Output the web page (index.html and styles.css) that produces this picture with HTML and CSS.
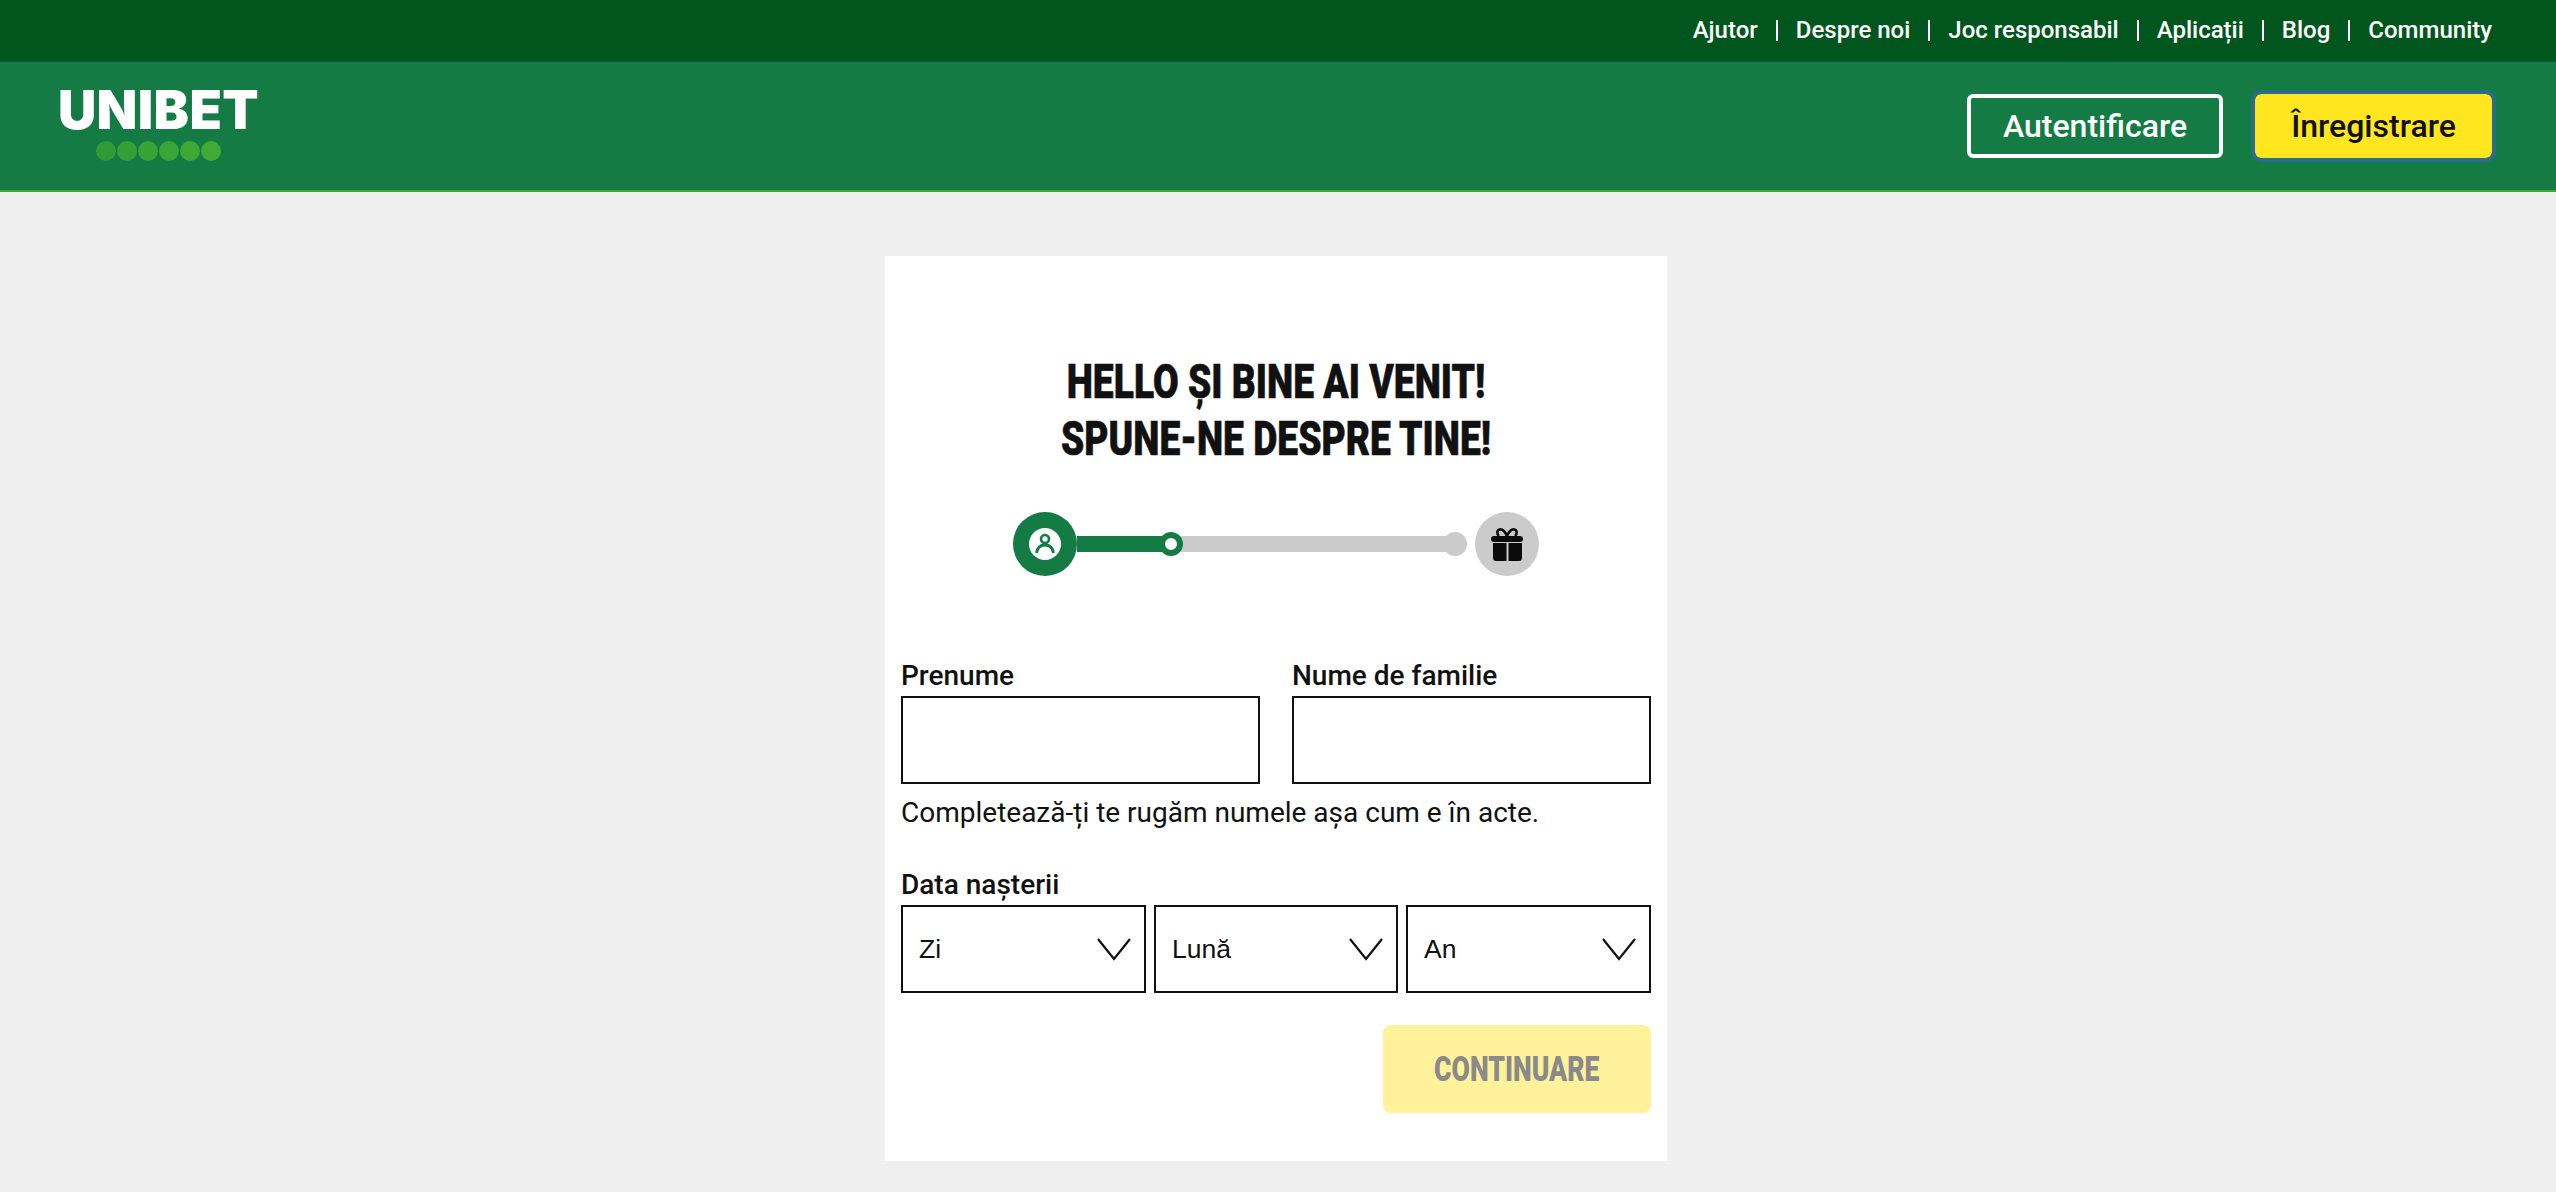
FILE: index.html
```html
<!DOCTYPE html>
<html lang="ro">
<head>
<meta charset="utf-8">
<title>Unibet</title>
<link rel="stylesheet" href="styles.css">
</head>
<body>
<header class="site-header">
  <nav class="topbar">
    <a>Ajutor</a><span class="sep"></span><a>Despre noi</a><span class="sep"></span><a>Joc responsabil</a><span class="sep"></span><a>Aplicații</a><span class="sep"></span><a>Blog</a><span class="sep"></span><a>Community</a>
  </nav>
  <div class="mainbar">
    <div class="logo">
      <span class="logo-text">UNIBET</span>
      <span class="logo-dots"><i></i><i></i><i></i><i></i><i></i><i></i></span>
    </div>
    <div class="actions">
      <button class="btn btn-login">Autentificare</button>
      <button class="btn btn-register">Înregistrare</button>
    </div>
  </div>
</header>
<main class="page">
  <section class="card">
    <h1 class="title">HELLO ȘI BINE AI VENIT!<br>SPUNE-NE DESPRE TINE!</h1>
    <div class="stepper">
      <span class="step step-active">
        <svg viewBox="0 0 32 32" width="32" height="32"><circle cx="16" cy="16" r="16" fill="#fff"/><circle cx="16" cy="11" r="4" fill="none" stroke="#147b45" stroke-width="2.6"/><path d="M7.500 25c.8-5 4-8 8.500-8s7.700 3 8.500 8" fill="none" stroke="#147b45" stroke-width="2.800"/></svg>
      </span>
      <span class="track">
        <span class="track-fill"></span>
        <span class="dot-current"></span>
        <span class="dot-end"></span>
      </span>
      <span class="step step-todo">
        <svg viewBox="0 0 32 33" width="32" height="33"><path d="M3 8h26a3 3 0 0 1 0 6H3a3 3 0 0 1 0-6zM2 15h13.500v18H5a3 3 0 0 1-3-3zM17.500 15H31v15a3 3 0 0 1-3 3H17.500z" fill="#0b0b0b"/><path d="M16 8C14 3.500 11 1 8.500 1.500S5.500 6 8 8M16 8c2-4.500 5-7 7.500-6.500S26.500 6 24 8" fill="none" stroke="#0b0b0b" stroke-width="2.600"/></svg>
      </span>
    </div>
    <form class="form">
      <div class="name-row">
        <div class="field">
          <label class="label" for="first">Prenume</label>
          <input class="input" id="first" type="text">
        </div>
        <div class="field">
          <label class="label" for="last">Nume de familie</label>
          <input class="input" id="last" type="text">
        </div>
      </div>
      <p class="hint">Completează-ți te rugăm numele așa cum e în acte.</p>
      <div class="label dob-label">Data nașterii</div>
      <div class="dob-row">
        <div class="select"><span>Zi</span><svg viewBox="0 0 34 24" width="34" height="24"><path d="M1 2l16 20L33 2" fill="none" stroke="#111" stroke-width="2.200"/></svg></div>
        <div class="select"><span>Lună</span><svg viewBox="0 0 34 24" width="34" height="24"><path d="M1 2l16 20L33 2" fill="none" stroke="#111" stroke-width="2.200"/></svg></div>
        <div class="select"><span>An</span><svg viewBox="0 0 34 24" width="34" height="24"><path d="M1 2l16 20L33 2" fill="none" stroke="#111" stroke-width="2.200"/></svg></div>
      </div>
      <div class="submit-row">
        <button class="continue" type="button" disabled><span class="continue-text">CONTINUARE</span></button>
      </div>
    </form>
  </section>
</main>
</body>
</html>
```

FILE: styles.css
```css
* { box-sizing: border-box; }
html, body { margin: 0; height: 100%; }
body { background: #efefef; font-family: Roboto, "Liberation Sans", sans-serif; color: #111; overflow: hidden; }

.topbar { height: 62px; background: #01561e; display: flex; align-items: center; justify-content: flex-end; padding: 0 64px 2px 0; color: #fff; font-size: 24px; font-weight: 500; }
.sep { width: 2px; height: 21px; background: #fff; margin: 0 18px; }

.mainbar { height: 130px; background: #147b45; border-bottom: 2px solid #3aaa35; display: flex; align-items: flex-start; justify-content: space-between; padding: 29px 64px 0 60px; }
.logo { display: flex; flex-direction: column; align-items: center; width: 197px; }
.logo-text { font-family: Inter, Roboto, sans-serif; font-weight: 900; font-size: 53px; line-height: 39px; height: 39px; color: #fff; letter-spacing: 0.400px; }
.logo-dots { display: flex; gap: 1px; margin-top: 11px; }
.logo-dots i { width: 20px; height: 20px; border-radius: 50%; background: #37a537; }
.logo-dots i:nth-child(1) { background: #2f9a36; }
.logo-dots i:nth-child(2) { background: #32a036; }
.logo-dots i:nth-child(3) { background: #35a336; }
.logo-dots i:nth-child(4) { background: #38a636; }
.logo-dots i:nth-child(5) { background: #3ca935; }
.logo-dots i:nth-child(6) { background: #40ac35; }

.actions { display: flex; gap: 32px; margin-top: 3px; }
.btn { height: 64px; border-radius: 6px; font-family: Roboto, sans-serif; font-weight: 500; font-size: 32px; padding: 0; }
.btn-login { width: 256px; background: transparent; border: 4px solid #fff; color: #fff; }
.btn-register { width: 237px; background: #ffe61e; border: 0; color: #111; outline: 4px solid #2a6c8e; }

.page { display: flex; justify-content: center; padding: 64px 4px 0 0; }
.card { width: 782px; height: 905px; background: #fff; padding: 97px 16px 0; }
.title { margin: 0; text-align: center; font-family: Roboto, sans-serif; font-weight: 900; font-size: 49px; line-height: 57px; color: #111; transform: scaleX(0.76); white-space: nowrap; -webkit-text-stroke: 0.6px #111; }

.stepper { display: flex; align-items: center; justify-content: center; margin-top: 45px; }
.step { width: 64px; height: 64px; border-radius: 50%; display: flex; align-items: center; justify-content: center; flex: none; }
.step-active { background: #147b45; }
.step-todo { background: #cbcbcb; margin-left: 8px; }
.track { position: relative; width: 390px; height: 16px; background: #cbcbcb; border-radius: 0 8px 8px 0; }
.track-fill { display: block; width: 90px; height: 16px; background: #147b45; }
.dot-current { position: absolute; left: 82px; top: -4px; width: 24px; height: 24px; border-radius: 50%; background: #fff; border: 6px solid #147b45; }
.dot-end { position: absolute; right: 0; top: -4px; width: 24px; height: 24px; border-radius: 50%; background: #cbcbcb; }

.form { margin-top: 85px; }
.name-row { display: grid; grid-template-columns: 359px 359px; gap: 32px; }
.field { display: flex; flex-direction: column; }
.label { display: block; font-size: 28px; font-weight: 500; line-height: 30px; height: 35px; }
.input { height: 88px; border: 2px solid #111; background: #fff; border-radius: 0; width: 100%; }
.hint { margin: 9px 0 0; font-size: 28px; line-height: 40px; }
.dob-label { margin-top: 37px; }
.dob-row { display: grid; grid-template-columns: 245px 244px 245px; gap: 8px; width: 750px; }
.select { height: 88px; border: 2px solid #111; display: flex; align-items: center; justify-content: space-between; padding: 0 13px 0 16px; font-family: "Liberation Sans", sans-serif; font-size: 26.500px; }
.submit-row { display: flex; justify-content: flex-end; margin-top: 32px; }
.continue { width: 268px; height: 88px; border: 0; border-radius: 8px; background: #fff29b; color: #8a8a8a; font-family: Roboto, sans-serif; font-weight: 900; font-size: 35px; padding: 0; }
.continue-text { display: inline-block; transform: scaleX(0.76); }
```
